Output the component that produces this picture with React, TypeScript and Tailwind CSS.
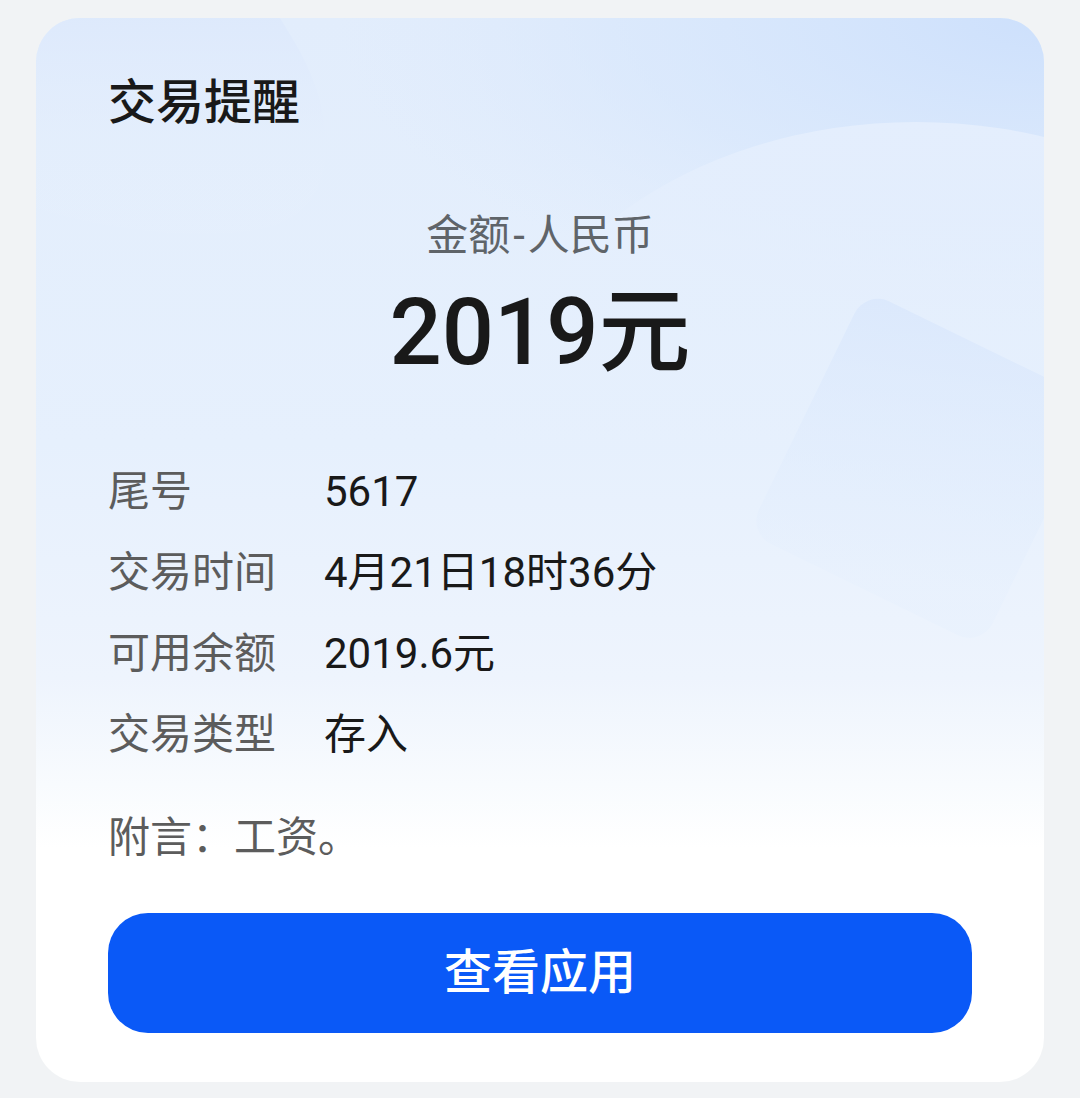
import React from "react";

const rows: [string, string][] = [
  ["尾号", "5617"],
  ["交易时间", "4月21日18时36分"],
  ["可用余额", "2019.6元"],
  ["交易类型", "存入"],
];

export default function App() {
  return (
    <div className="min-h-[1098px] w-full bg-[#f1f3f5] px-[36px] pt-[18px] font-['Roboto','Noto_Sans_CJK_SC',sans-serif]">
      <div className="relative h-[1064px] w-full overflow-hidden rounded-[44px] bg-[linear-gradient(180deg,#e2edfc_0%,#e6f0fd_40%,#eef4fd_62%,#f8fbfe_72%,#ffffff_78%)]">
        <svg
          className="pointer-events-none absolute inset-0"
          width="1008"
          height="1064"
          viewBox="0 0 1008 1064"
          fill="none"
        >
          <defs>
            <radialGradient id="tr" cx="1" cy="0" r="1">
              <stop offset="0" stopColor="#cde0fc" stopOpacity="1" />
              <stop offset="0.6" stopColor="#d6e6fc" stopOpacity="0.6" />
              <stop offset="1" stopColor="#dde9fc" stopOpacity="0" />
            </radialGradient>
            <linearGradient id="el" x1="0" y1="0" x2="0" y2="1">
              <stop offset="0" stopColor="#e4eefd" stopOpacity="1" />
              <stop offset="0.35" stopColor="#e5effd" stopOpacity="0.6" />
              <stop offset="0.6" stopColor="#e8f1fd" stopOpacity="0" />
            </linearGradient>
            <linearGradient id="sq" x1="0" y1="0" x2="0.3" y2="1">
              <stop offset="0" stopColor="#d9e7fc" stopOpacity="0.8" />
              <stop offset="1" stopColor="#e3eefd" stopOpacity="0.3" />
            </linearGradient>
            <linearGradient id="tl" x1="0" y1="0" x2="0" y2="1">
              <stop offset="0" stopColor="#dde9fc" stopOpacity="0.9" />
              <stop offset="1" stopColor="#e8f1fd" stopOpacity="0.1" />
            </linearGradient>
          </defs>
          <rect x="300" y="0" width="708" height="300" fill="url(#tr)" />
          <ellipse cx="880" cy="420" rx="420" ry="316" fill="url(#el)" />
          <path
            d="M0 0 H244 C262 30 290 70 290 130 C290 170 270 200 230 210 C160 225 60 210 0 190 Z"
            fill="url(#tl)"
          />
          <rect
            x="0"
            y="0"
            width="260"
            height="270"
            rx="26"
            fill="url(#sq)"
            transform="translate(830 272) rotate(26)"
          />
        </svg>

        <div className="relative flex h-full flex-col px-[72px]">
          <div className="mt-[55px] h-[60px] text-[48px] font-medium leading-[60px] text-[#191919]">
            交易提醒
          </div>
          <div className="mt-[75px] h-[56px] text-center text-[42px] leading-[56px] text-[#5f6469]">
            金额<span className="mx-[3px]">-</span>人民币
          </div>
          <div className="mt-[14px] h-[110px] text-center text-[92px] font-medium leading-[110px] text-[#191919]">
            2019元
          </div>
          <div className="mt-[63px] flex flex-col">
            {rows.map(([k, v]) => (
              <div key={k} className="flex h-[81px] items-center text-[42px]">
                <span className="w-[216px] text-[#5c5c5c]">{k}</span>
                <span className="text-[#191919]">{v}</span>
              </div>
            ))}
          </div>
          <div className="mt-[35px] h-[56px] text-[42px] leading-[56px] text-[#5c5c5c]">
            附言：工资。
          </div>
          <button className="mt-[47px] flex h-[120px] w-full items-center justify-center rounded-[40px] bg-[#0a59f7] text-[48px] font-medium text-white">
            查看应用
          </button>
        </div>
      </div>
    </div>
  );
}
